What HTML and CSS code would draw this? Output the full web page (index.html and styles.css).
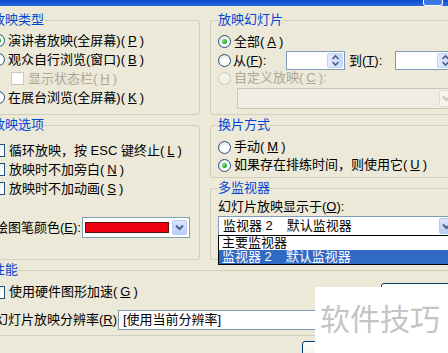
FILE: index.html
```html
<!DOCTYPE html>
<html lang="zh-CN">
<head>
    <meta charset="UTF-8">
    <meta name="viewport" content="width=device-width, initial-scale=1.0">
    <title>设置放映方式</title>
    <link rel="stylesheet" href="styles.css">
</head>
<body>
    <div class="window">
        <div class="titlebar"><span class="help-btn"></span></div>

        <div class="dialog">
            <div class="columns">
                <div class="column column-left">
                    <fieldset class="group group-type">
                        <legend>放映类型</legend>
                        <div class="option"><span class="radio checked"></span>演讲者放映(全屏幕)(<u>P</u>)</div>
                        <div class="option"><span class="radio"></span>观众自行浏览(窗口)(<u>B</u>)</div>
                        <div class="option option-sub disabled"><span class="check"></span>显示状态栏(<u>H</u>)</div>
                        <div class="option"><span class="radio"></span>在展台浏览(全屏幕)(<u>K</u>)</div>
                    </fieldset>

                    <fieldset class="group group-options">
                        <legend>放映选项</legend>
                        <div class="option"><span class="check"></span>循环放映，按 ESC 键终止(<u>L</u>)</div>
                        <div class="option"><span class="check"></span>放映时不加旁白(<u>N</u>)</div>
                        <div class="option"><span class="check"></span>放映时不加动画(<u>S</u>)</div>
                        <div class="pen-row">
                            <span class="pen-label">绘图笔颜色(<u>E</u>):</span>
                            <div class="combo combo-color">
                                <span class="swatch"></span>
                                <span class="combo-btn">
                                    <svg width="9" height="7" viewBox="0 0 9 7"><polyline points="1,1.5 4.5,5 8,1.5" fill="none" stroke="#4d6185" stroke-width="2"/></svg>
                                </span>
                            </div>
                        </div>
                    </fieldset>
                </div>

                <div class="column column-right">
                    <fieldset class="group group-slides">
                        <legend>放映幻灯片</legend>
                        <div class="option"><span class="radio checked"></span>全部(<u>A</u>)</div>
                        <div class="range-row">
                            <span class="radio"></span>
                            <span class="range-label">从(<u>F</u>):</span>
                            <div class="spin">
                                <span class="spin-btn">
                                    <svg width="9" height="13" viewBox="0 0 9 13"><polyline points="1.5,5 4.5,2 7.5,5" fill="none" stroke="#4d6185" stroke-width="1.6"/><polyline points="1.5,8 4.5,11 7.5,8" fill="none" stroke="#4d6185" stroke-width="1.6"/></svg>
                                </span>
                            </div>
                            <span class="range-to">到(<u>T</u>):</span>
                            <div class="spin spin-wide">
                                <span class="spin-btn">
                                    <svg width="9" height="13" viewBox="0 0 9 13"><polyline points="1.5,5 4.5,2 7.5,5" fill="none" stroke="#4d6185" stroke-width="1.6"/><polyline points="1.5,8 4.5,11 7.5,8" fill="none" stroke="#4d6185" stroke-width="1.6"/></svg>
                                </span>
                            </div>
                        </div>
                        <div class="option option-short disabled"><span class="radio"></span>自定义放映(<u>C</u>):</div>
                        <div class="combo combo-disabled combo-custom">
                            <span class="combo-value"></span>
                            <span class="combo-btn">
                                <svg width="9" height="7" viewBox="0 0 9 7"><polyline points="1,1.5 4.5,5 8,1.5" fill="none" stroke="#c9c7ba" stroke-width="2"/></svg>
                            </span>
                        </div>
                    </fieldset>

                    <fieldset class="group group-advance">
                        <legend>换片方式</legend>
                        <div class="option option-short"><span class="radio"></span>手动(<u>M</u>)</div>
                        <div class="option option-short"><span class="radio checked"></span>如果存在排练时间，则使用它(<u>U</u>)</div>
                    </fieldset>

                    <fieldset class="group group-monitors">
                        <legend>多监视器</legend>
                        <div class="field-label">幻灯片放映显示于(<u>O</u>):</div>
                        <div class="combo combo-monitor">
                            <span class="combo-value">监视器 2<span class="tab">默认监视器</span></span>
                            <span class="combo-btn">
                                <svg width="9" height="7" viewBox="0 0 9 7"><polyline points="1,1.5 4.5,5 8,1.5" fill="none" stroke="#4d6185" stroke-width="2"/></svg>
                            </span>
                            <ul class="dropdown-list">
                                <li>主要监视器</li>
                                <li class="selected">监视器 2<span class="tab">默认监视器</span></li>
                            </ul>
                        </div>
                    </fieldset>
                </div>
            </div>

            <fieldset class="group group-perf">
                <legend>性能</legend>
                <div class="perf-top">
                    <div class="option"><span class="check"></span>使用硬件图形加速(<u>G</u>)</div>
                    <button class="xp-button">提示(<u>I</u>)</button>
                </div>
                <div class="perf-res">
                    <span class="res-label">幻灯片放映分辨率(<u>R</u>):</span>
                    <div class="combo combo-res">
                        <span class="combo-value">[使用当前分辨率]</span>
                    </div>
                </div>
            </fieldset>

            <div class="buttons">
                <button class="xp-button">确定</button>
                <button class="xp-button">取消</button>
            </div>
        </div>
    </div>

    <div class="watermark">软件技巧</div>
</body>
</html>
```

FILE: styles.css
```css
:root {
    --dialog-bg: #ece9d8;
    --group-border: #d0d0bf;
    --group-label: #0046d5;
    --control-border: #7f9db9;
    --disabled-text: #aca899;
}

body {
    margin: 0;
    width: 448px;
    height: 353px;
    overflow: hidden;
    position: relative;
    background-color: var(--dialog-bg);
    font-family: "Liberation Sans", "Noto Sans CJK SC", sans-serif;
    font-size: 13px;
    line-height: 14px;
    color: #000;
}

.window {
    width: 480px;
    margin-left: -16px;
}

/* bottom strip of the blue XP title bar */
.titlebar {
    height: 6px;
    padding-left: 439px;
    background: linear-gradient(#0a4ccf, #2a67de);
}

.help-btn {
    display: block;
    width: 18px;
    height: 5px;
    border: 1px solid #fff;
    border-top: none;
    border-radius: 0 0 3px 3px;
    background-color: #3a78e6;
}

.dialog {
    padding-top: 7px;
}

.columns {
    display: flex;
    gap: 10px;
}

.column {
    display: flex;
    flex-direction: column;
    gap: 3px;
}

.column-left {
    width: 216px;
}

.column-right {
    width: 254px;
}

.group {
    margin: 0;
    min-width: 0;
    border: 1px solid var(--group-border);
    border-radius: 3px;
    padding: 0 7px;
}

.group legend {
    padding: 0;
    color: var(--group-label);
    line-height: 14px;
}

.option {
    display: flex;
    align-items: center;
    gap: 3px;
    height: 19px;
    white-space: nowrap;
}

.option-short {
    height: 18px;
}

.option-sub {
    padding-left: 19px;
}

.disabled {
    color: var(--disabled-text);
}

.radio {
    flex: none;
    width: 13px;
    height: 13px;
    box-sizing: border-box;
    border: 1px solid #1c5180;
    border-radius: 50%;
    background: radial-gradient(circle at 65% 70%, #ffffff 0, #ffffff 35%, #dcdbd3 95%);
    display: flex;
    align-items: center;
    justify-content: center;
}

.radio.checked::after {
    content: "";
    width: 5px;
    height: 5px;
    border-radius: 50%;
    background: radial-gradient(circle at 35% 35%, #7ee67e, #21a121 70%);
}

.disabled .radio {
    border-color: #cac8bb;
    background: #f2f1ea;
}

.check {
    flex: none;
    width: 13px;
    height: 13px;
    box-sizing: border-box;
    border: 1px solid #1c5180;
    background: linear-gradient(135deg, #dcdcd5, #ffffff 80%);
    margin-right: 1px;
}

.disabled .check {
    border-color: #cac8bb;
    background: #ffffff;
}

/* group: 放映类型 */
.group-type {
    padding-top: 4px;
    padding-bottom: 7px;
}

/* group: 放映选项 */
.group-options {
    padding-top: 9px;
    padding-bottom: 21px;
}

.pen-row {
    display: flex;
    align-items: center;
    margin-top: 19px;
    padding-left: 3px;
    white-space: nowrap;
}

.pen-label {
    width: 87px;
}

/* combo boxes */
.combo {
    display: flex;
    align-items: stretch;
    height: 20px;
    box-sizing: border-box;
    border: 1px solid var(--control-border);
    background-color: #fff;
    padding: 1px;
    position: relative;
}

.combo-value {
    flex: 1;
    padding-left: 3px;
    line-height: 16px;
    white-space: nowrap;
}

.tab {
    margin-left: 14px;
}

.combo-btn {
    flex: none;
    width: 15px;
    box-sizing: border-box;
    border: 1px solid #b7c9f3;
    border-radius: 2px;
    background: linear-gradient(#dde7fd, #b9cdf8);
    display: flex;
    align-items: center;
    justify-content: center;
}

.combo-color {
    width: 108px;
    height: 21px;
    padding: 2px;
    gap: 3px;
}

.swatch {
    flex: 1;
    margin: 2px 0;
    border: 1px solid #5a1010;
    background-color: #ee0010;
}

.combo-disabled {
    border-color: #c9c7ba;
    background-color: #efede3;
}

.combo-disabled .combo-btn {
    border-color: #e0ded3;
    background: #f4f3ee;
}

/* group: 放映幻灯片 */
.group-slides {
    padding-top: 5px;
    padding-bottom: 5px;
}

.range-row {
    display: flex;
    align-items: center;
    height: 19px;
    white-space: nowrap;
}

.range-row .radio {
    margin-right: 2px;
}

.range-label {
    width: 53px;
}

.range-to {
    width: 46px;
    margin-left: 4px;
}

.spin {
    width: 59px;
    height: 19px;
    box-sizing: border-box;
    border: 1px solid var(--control-border);
    background-color: #fff;
    padding: 1px;
    display: flex;
    justify-content: flex-end;
}

.spin-wide {
    width: 60px;
}

.spin-btn {
    width: 14px;
    border: 1px solid #c6d5f6;
    border-radius: 2px;
    background: linear-gradient(90deg, #e3ebfd, #c7d7fa);
    display: flex;
    align-items: center;
    justify-content: center;
}

.option.option-short.disabled {
    height: 16px;
}

.combo-custom {
    margin: 2px 0 0 19px;
    height: 21px;
}

/* group: 换片方式 */
.group-advance {
    padding-top: 6px;
    padding-bottom: 3px;
}

/* group: 多监视器 */
.group-monitors {
    padding-top: 5px;
    padding-bottom: 23px;
}

.field-label {
    white-space: nowrap;
}

.combo-monitor {
    margin-top: 2px;
}

.dropdown-list {
    position: absolute;
    left: -1px;
    right: -1px;
    top: 100%;
    margin: 0;
    padding: 0;
    list-style: none;
    border: 1px solid #000;
    background-color: #fff;
}

.dropdown-list li {
    height: 14px;
    padding-left: 3px;
    line-height: 14px;
    white-space: nowrap;
}

.dropdown-list .selected {
    background-color: #316ac5;
    color: #fff;
}

/* group: 性能 */
.group-perf {
    margin-top: 3px;
    padding-top: 6px;
    padding-bottom: 5px;
}

.perf-top {
    display: flex;
    justify-content: space-between;
    align-items: flex-start;
}

.perf-top .option {
    height: 18px;
}

.perf-res {
    display: flex;
    align-items: center;
    margin-top: 4px;
    padding-left: 3px;
    white-space: nowrap;
}

.res-label {
    width: 123px;
}

.combo-res {
    width: 222px;
}

.xp-button {
    width: 75px;
    height: 23px;
    border: 1px solid #003c74;
    border-radius: 3px;
    background: linear-gradient(#ffffff, #ece9d8);
    font: inherit;
    padding: 0;
}

.buttons {
    display: flex;
    justify-content: flex-end;
    gap: 6px;
    padding: 5px 6px 0 0;
}

.watermark {
    position: absolute;
    left: 315px;
    top: 287px;
    width: 128px;
    height: 51px;
    padding: 15px 0 0 5px;
    background-color: #fff;
    color: #c4c4c4;
    font-family: "Noto Sans CJK SC", sans-serif;
    font-size: 30px;
    line-height: 30px;
    white-space: nowrap;
}
```
